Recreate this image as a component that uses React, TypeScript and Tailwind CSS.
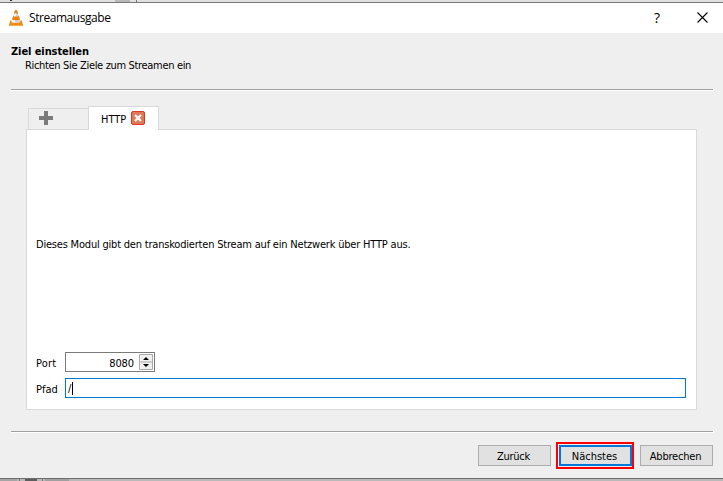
import React from "react";

function Cone() {
  return (
    <svg width="16" height="16" viewBox="0 0 16 16" className="shrink-0">
      <path d="M2.200 10.500h11.600l1.400 5.200H.8z" fill="#f08c14" />
      <path d="M7 .3h2l3.600 11.700c-2 1.400-7.200 1.400-9.200 0z" fill="#d4d4d4" />
      <path d="M7 .3h2l1.100 3.200H5.900z" fill="#e6821e" />
      <path d="M5.100 6c1.500.7 4.300.7 5.800 0l1.100 3.500c-1.800 1-6.200 1-8 0z" fill="#ee8010" />
      <path d="M6.800 3.500h1.200v2.800H5.500zM4 9.800l3 .5v2.500l-3.500-.8z" fill="#f5f5f5" />
    </svg>
  );
}

function Rule() {
  return (
    <div className="ml-[11px] w-[703px] shrink-0 bg-white pb-px">
      <div className="h-px w-[702px] bg-[#a0a0a0]" />
    </div>
  );
}

const button = "flex h-[21px] w-[73px] items-center justify-center bg-[#e1e1e1] pt-[2px] pr-[2px] whitespace-nowrap";

export default function App() {
  return (
    <div className="flex h-[481px] w-[723px] flex-col overflow-hidden bg-[#efefef] font-['DejaVu_Sans_Condensed','DejaVu_Sans',sans-serif] text-[11px] leading-[14px] text-black [font-stretch:condensed]">
      <div className="flex h-[2px] shrink-0 bg-[#e1e1e1] pl-[10px]">
        <div className="h-px w-[2px] bg-[#202a45]" />
        <div className="ml-[103px] h-[2px] w-[15px] bg-[#b8b8b8]" />
        <div className="ml-[6px] h-[2px] w-px bg-[#777]" />
      </div>
      <header className="flex h-[31px] shrink-0 items-center border-t border-[#777] bg-white pl-2 font-['Open_Sans',sans-serif] [font-stretch:normal]">
        <Cone />
        <span className="ml-[5px] text-[12px] tracking-[-0.45px]">Streamausgabe</span>
        <span className="ml-auto w-[7px] text-[14px]">?</span>
        <svg width="11" height="11" viewBox="0 0 11 11" className="mr-[15px] mb-px ml-[36px]">
          <path d="M.5.5l10 10M10.500.5l-10 10" stroke="#000" strokeWidth="1.1" />
        </svg>
      </header>

      <section className="h-[56px] shrink-0 pt-[12px] pl-[11px]">
        <h1 className="font-bold tracking-[-0.08px]">Ziel einstellen</h1>
        <p className="pl-[14px] tracking-[-0.33px]">Richten Sie Ziele zum Streamen ein</p>
      </section>
      <Rule />

      <main className="mt-[15px] ml-[26px] flex h-[304px] w-[671px] shrink-0 flex-col">
        <div className="z-10 -mb-px flex h-[24px] items-end pl-[2px]">
          <div className="mb-px flex h-[21px] w-[60px] border-t border-l border-[#d9d9d9] pt-[2px] pl-[10px]">
            <svg width="14" height="14" viewBox="0 0 14 14">
              <path d="M5 0h4v5h5v4H9v5H5V9H0V5h5z" fill="#7b7b7b" />
            </svg>
          </div>
          <div className="flex h-[24px] w-[71px] items-start border-x border-t border-[#d9d9d9] bg-white pt-[4px] pl-[12px]">
            <span className="w-[30px] pt-[2px]">HTTP</span>
            <svg width="14" height="14" viewBox="0 0 14 14">
              <rect x=".5" y=".5" width="13" height="13" rx="1.5" fill="#df7857" stroke="#d93a29" />
              <path d="M4 4l6 6M10 4l-6 6" stroke="#fff" strokeWidth="2.200" />
            </svg>
          </div>
        </div>
        <div className="flex h-[281px] flex-col border border-[#d9d9d9] bg-white pl-[9px]">
          <p className="flex h-[222px] items-center pt-[8px] tracking-[-0.2px] whitespace-nowrap">Dieses Modul gibt den transkodierten Stream auf ein Netzwerk über HTTP aus.</p>
          <div className="flex h-[20px] items-center">
            <label className="w-[29px] pt-[3px] tracking-[0.2px]">Port</label>
            <div className="flex h-[20px] w-[90px] items-center justify-end border border-[#7a7a7a] pr-px">
              <span className="mr-[5px] pt-[3px] tracking-[-0.1px]">8080</span>
              <svg width="14" height="16" viewBox="0 0 14 16">
                <path d="M.5.5h13v15H.5zM.5 8h13" fill="#f0f0f0" stroke="#acacac" />
                <path d="M7 3l3 3H4zM7 13l3-3H4z" fill="#000" />
              </svg>
            </div>
          </div>
          <div className="mt-[6px] flex h-[20px] items-center">
            <label className="w-[29px] pt-[3px]">Pfad</label>
            <div className="flex h-[20px] w-[621px] items-center border border-[#0078d7] pl-[2px]">
              <span className="w-[4px] pt-[2px]">/</span>
              <span className="h-[13px] w-px bg-black" />
            </div>
          </div>
        </div>
      </main>

      <div className="h-[21px] shrink-0" />
      <Rule />
      <footer className="flex h-[45px] shrink-0 items-start pt-[9px] pl-[478px]">
        <button className={`${button} mt-[3px] border border-[#adadad] tracking-[-0.3px]`}>Zurück</button>
        <div className="ml-[5px] h-[27px] w-[78px] border-2 border-[#ff0000] p-px">
          <button className={`${button} border-2 border-[#0078d7]`}>Nächstes</button>
        </div>
        <button className={`${button} mt-[3px] ml-[6px] border border-[#adadad] tracking-[-0.2px]`}>Abbrechen</button>
      </footer>
      <div className="flex h-[3px] shrink-0 border-t border-[#6d6d6d] bg-[#b9b9b9]">
        <div className="w-[17px] bg-[#a5a5a5]" />
        <div className="ml-[2px] w-px bg-[#777]" />
        <div className="ml-[5px] w-[12px] bg-[#5e5e5e]" />
        <div className="ml-[5px] w-px bg-[#777]" />
        <div className="ml-[2px] w-[24px] bg-[#a0a0a0]" />
      </div>
    </div>
  );
}
